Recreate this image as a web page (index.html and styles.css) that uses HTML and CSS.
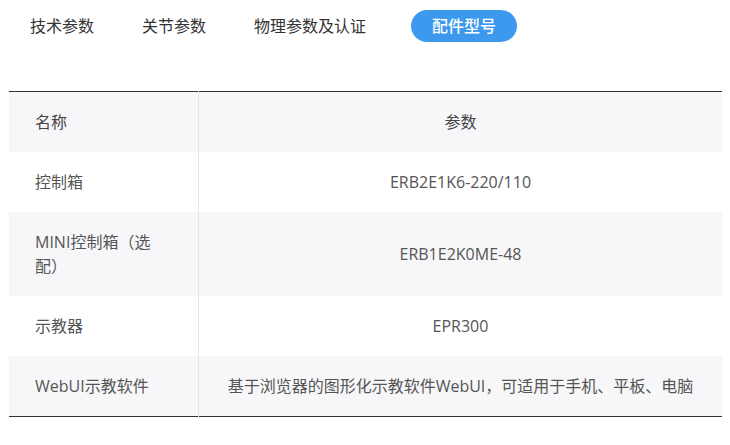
FILE: index.html
```html
<!DOCTYPE html>
<html lang="zh">
<head>
<meta charset="utf-8">
<title>配件型号</title>
<link rel="stylesheet" href="styles.css">
</head>
<body>
<div class="page">
  <nav class="tabs">
    <span class="tab">技术参数</span>
    <span class="tab">关节参数</span>
    <span class="tab">物理参数及认证</span>
    <span class="tab active">配件型号</span>
  </nav>
  <table class="spec">
    <thead>
      <tr><th class="name">名称</th><th class="val">参数</th></tr>
    </thead>
    <tbody>
      <tr><td class="name">控制箱</td><td class="val">ERB2E1K6-220/110</td></tr>
      <tr class="alt"><td class="name">MINI控制箱（选配）</td><td class="val">ERB1E2K0ME-48</td></tr>
      <tr><td class="name">示教器</td><td class="val">EPR300</td></tr>
      <tr class="alt"><td class="name">WebUI示教软件</td><td class="val">基于浏览器的图形化示教软件WebUI，可适用于手机、平板、电脑</td></tr>
    </tbody>
  </table>
</div>
</body>
</html>
```

FILE: styles.css
```css
html, body {
  margin: 0;
  padding: 0;
  background: #fff;
}
body {
  font-family: "Open Sans", "Noto Sans CJK SC", sans-serif;
  font-size: 16px;
  color: #333;
}
.page {
  padding: 10px 8px 0 9px;
}
.tabs {
  display: flex;
  align-items: center;
  gap: 6px;
  height: 32px;
}
.tab {
  padding: 0 21px;
  line-height: 32px;
  height: 32px;
  border-radius: 16px;
  color: #333;
  white-space: nowrap;
}
.tab.active {
  margin-left: 18px;
  background: #3d99ee;
  color: #fff;
  font-weight: 500;
}
.spec {
  margin-top: 49px;
  width: 713px;
  border-collapse: collapse;
  border-top: 1px solid #333;
  border-bottom: 1px solid #333;
  color: #555;
}
.spec th, .spec td {
  font-weight: normal;
  padding: 18px 26px;
  line-height: 24px;
  vertical-align: middle;
}
.spec .name {
  width: 137px;
  text-align: left;
  border-right: 1px solid #e6e6e8;
}
.spec .val {
  text-align: center;
}
.spec thead tr, .spec tr.alt {
  background: #f7f7f9;
}
.spec thead th {
  color: #444;
}
```
